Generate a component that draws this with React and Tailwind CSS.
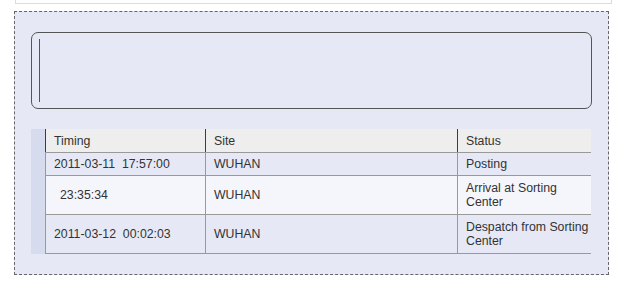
export default function App() {
  const rows = [
    { time: '2011-03-11  17:57:00', site: 'WUHAN', status: 'Posting', h: 'h-[23px]', bg: 'bg-[#e6e9f5]' },
    { time: '23:35:34', site: 'WUHAN', status: 'Arrival at Sorting Center', h: 'h-[39px]', bg: 'bg-[#f5f6fb]', indent: true },
    { time: '2011-03-12  00:02:03', site: 'WUHAN', status: 'Despatch from Sorting Center', h: 'h-[39px]', bg: 'bg-[#e6e9f5]' },
  ];

  return (
    <div className="w-[620px] h-[282px] bg-white text-[12.3px] leading-[14px] text-[#333] font-['Liberation_Sans',Arial,sans-serif]">
      <div className="ml-[15px] w-[597px] h-[4px] border border-t-0 border-[#dcdcdc] bg-white" />

      <div className="ml-[14px] mt-[7px] w-[595px] h-[264px] border border-dashed border-[#666] bg-[#e6e9f5] px-[16px] pt-[20px]">
        <div className="h-[77px] w-[561px] rounded-[7px] border border-[#555] flex py-[6px] pl-[7px]">
          <div className="border-l border-[#555]" />
        </div>

        <div className="mt-[20px] flex">
          <div className="w-[14px] bg-[#d7dbee]" />
          <div className="w-[546px]">
            <div className="flex h-[24px] bg-[#eeeeee] border-b border-[#999]">
              <div className="w-[160px] border-l border-[#cc0000] pl-[8px] flex items-center">Timing</div>
              <div className="w-[252px] border-l border-[#cc0000] pl-[8px] flex items-center">Site</div>
              <div className="flex-1 border-l border-[#cc0000] pl-[8px] flex items-center">Status</div>
            </div>
            {rows.map((r, i) => (
              <div key={i} className={`flex border-b border-[#999] ${r.h} ${r.bg}`}>
                <div className={`w-[160px] border-l border-[#999] flex items-center whitespace-pre ${r.indent ? 'pl-[14px]' : 'pl-[8px]'}`}>
                  {r.time}
                </div>
                <div className="w-[252px] border-l border-[#999] pl-[8px] flex items-center">{r.site}</div>
                <div className="flex-1 border-l border-[#999] pl-[8px] flex items-center">{r.status}</div>
              </div>
            ))}
          </div>
        </div>
      </div>
    </div>
  );
}
